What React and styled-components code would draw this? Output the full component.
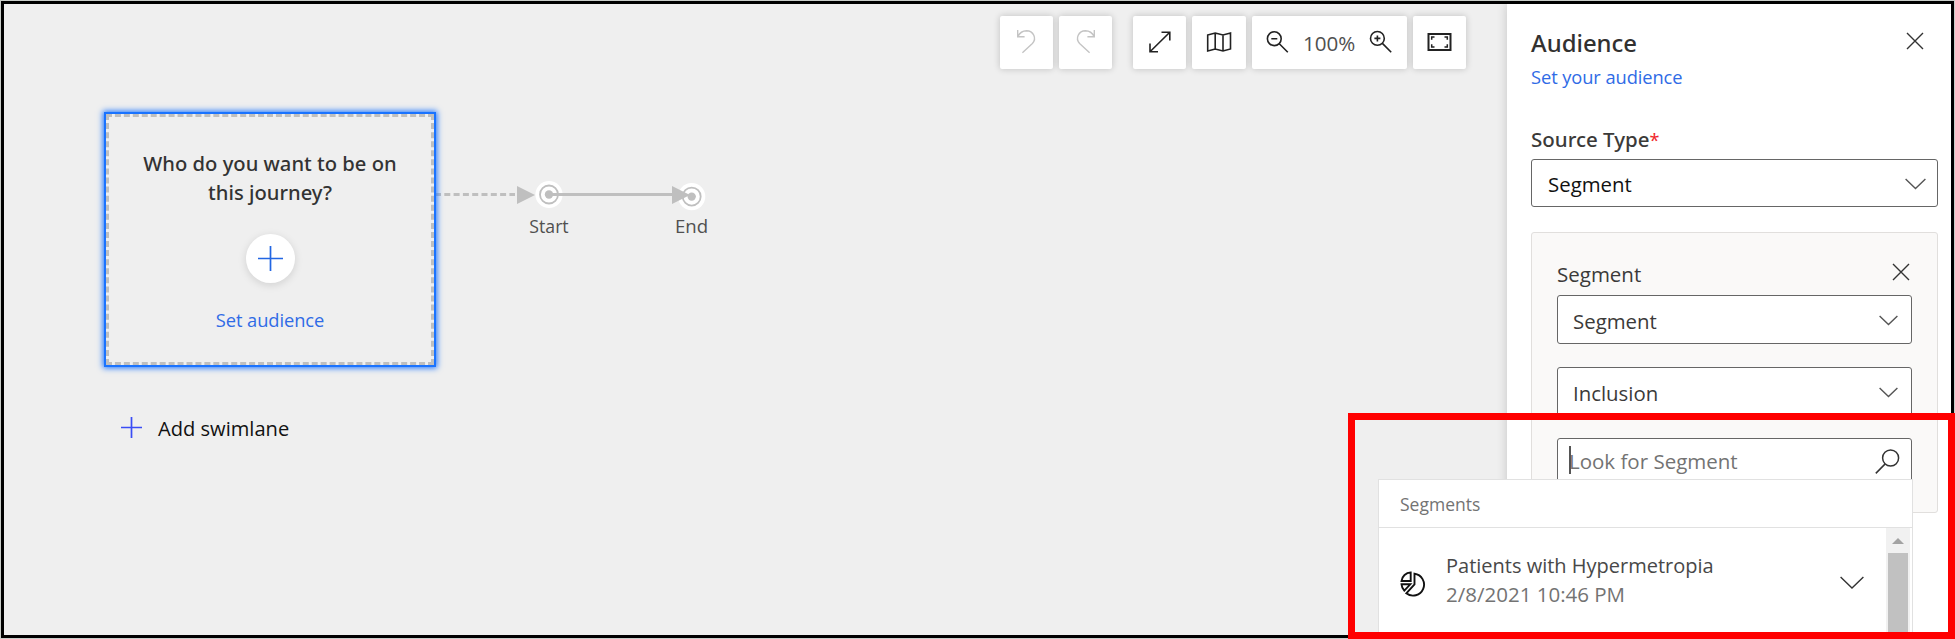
import React from "react";
import styled, { createGlobalStyle } from "styled-components";

const GlobalStyle = createGlobalStyle`
  *, *::before, *::after { box-sizing: border-box; }
  body {
    margin: 0;
    background: #c9cdc9;
    font-family: "Open Sans", "Noto Sans", sans-serif;
    color: #323130;
  }
`;

const Screen = styled.div`
  position: relative;
  width: 1955px;
  height: 639px;
  padding: 1px;
  overflow: hidden;
`;

const Frame = styled.div`
  display: flex;
  width: 1953px;
  height: 637px;
  border: 3px solid #000;
  background: #efefef;
`;

const Canvas = styled.main`
  position: relative;
  flex: 1;
  min-width: 0;
`;

const Toolbar = styled.div`
  display: flex;
  justify-content: flex-end;
  gap: 6px;
  padding: 12px 41px 0 0;
`;

const ToolButton = styled.button`
  display: flex;
  width: ${(p) => p.$width || 53}px;
  height: 53px;
  margin: 0 ${(p) => p.$after || 0}px 0 0;
  padding: 0;
  border: 0;
  border-radius: 2px;
  background: #fff;
  color: ${(p) => (p.$muted ? "#c4c4c4" : "#222")};
  box-shadow: 0 0 7px rgba(0, 0, 0, 0.2);
  font: inherit;
`;

const ZoomValue = styled.span`
  width: 52px;
  margin: 12px 0 0 -2px;
  font-size: 20.6px;
  line-height: 30px;
  color: #505050;
  white-space: nowrap;
`;

const Stroke = styled.svg`
  display: block;
  flex: none;
  fill: none;
  stroke: ${(p) => p.$color || "currentColor"};
  stroke-width: ${(p) => p.$weight || 1.4};
  transform: ${(p) => (p.$flip ? "scaleX(-1)" : "none")};
`;

const Node = styled.div`
  position: absolute;
  left: ${(p) => p.$x}px;
  top: ${(p) => p.$y}px;
`;

const AudienceCard = styled.section`
  display: flex;
  flex-direction: column;
  align-items: center;
  width: 328px;
  height: 251px;
  padding-top: 32px;
  border: 3px dashed #bfbfbf;
  box-shadow: 0 0 0 2px #1a73ff, 0 0 6px 3px #1a73ff;
`;

const CardTitle = styled.h2`
  width: 270px;
  margin: 0;
  font-family: "Noto Sans", sans-serif;
  font-size: 20.2px;
  font-weight: 500;
  line-height: 29px;
  text-align: center;
  color: #333;
`;

const RoundButton = styled.button`
  display: grid;
  place-items: center;
  width: 49px;
  height: 49px;
  margin: 27px 0 25px;
  padding: 0;
  border: 0;
  border-radius: 50%;
  background: #fff;
  box-shadow: 0 2px 8px rgba(0, 0, 0, 0.13);
`;

const Link = styled.a`
  font-size: 18.3px;
  line-height: 24px;
  letter-spacing: -0.08px;
  color: #2f6be6;
`;

const NodeLabel = styled.span`
  display: block;
  width: 60px;
  font-size: ${(p) => p.$size || 18}px;
  line-height: 24px;
  text-align: center;
  color: #505050;
`;

const Swimlane = styled.button`
  display: flex;
  align-items: center;
  gap: 16px;
  padding: 0;
  border: 0;
  background: none;
  font: 20.1px/28px "Open Sans", "Noto Sans", sans-serif;
  color: #111;
  white-space: nowrap;
`;

const Panel = styled.aside`
  position: relative;
  flex: none;
  width: 444px;
  padding: 23px 13px 0 24px;
  background: #fff;
  box-shadow: 0 0 10px rgba(0, 0, 0, 0.18);
  clip-path: inset(0 0 0 -20px);
`;

const Row = styled.div`
  display: flex;
  justify-content: space-between;
  align-items: flex-start;
  padding-right: ${(p) => p.$inset || 0}px;
`;

const PanelTitle = styled.h1`
  margin: 0;
  font-family: "Noto Sans", sans-serif;
  font-size: 23.9px;
  font-weight: 500;
  line-height: 32px;
`;

const PanelLink = styled.a`
  display: block;
  margin-top: 5px;
  font-size: 18.3px;
  line-height: 26px;
  letter-spacing: -0.08px;
  color: #2f6be6;
`;

const Label = styled.label`
  display: block;
  height: 28px;
  margin-top: ${(p) => p.$top || 0}px;
  font-family: ${(p) => (p.$strong ? '"Noto Sans"' : '"Open Sans"')}, sans-serif;
  font-size: 20.5px;
  font-weight: ${(p) => (p.$strong ? 500 : 400)};
  line-height: 28px;
  color: #3b3a39;
`;

const Required = styled.span`
  font-size: 18px;
  font-weight: 400;
  color: #f0262d;
`;

const Field = styled.div`
  display: flex;
  justify-content: space-between;
  align-items: center;
  height: ${(p) => p.$height || 49}px;
  margin-top: ${(p) => p.$top}px;
  padding: 2px ${(p) => p.$right || 13}px 0 ${(p) => p.$left || 15}px;
  border: 1px solid #666;
  border-radius: 3px;
  background: #fff;
  font-size: 20.4px;
  line-height: 30px;
  color: ${(p) => p.$color || "#3b3a39"};
`;

const SegmentCard = styled.section`
  height: 281px;
  margin-top: 25px;
  padding: 27px 25px 0;
  border: 1px solid #e1dfdd;
  border-radius: 3px;
  background: #faf9f8;
`;

const SearchText = styled.span`
  position: relative;
  margin-top: -5px;
  font-size: 20.5px;
`;

const Caret = styled.i`
  position: absolute;
  left: 0;
  top: 0;
  width: 2px;
  height: 28px;
  background: #555;
`;

const Flyout = styled.div`
  position: absolute;
  left: 1378px;
  top: 479px;
  width: 535px;
  height: 160px;
  border: 1px solid #e1e1e1;
  background: #fff;
`;

const FlyoutHeader = styled.div`
  height: 48px;
  padding: 12px 0 0 21px;
  border-bottom: 1px solid #e1e1e1;
  font-size: 17.5px;
  line-height: 24px;
  color: #737373;
`;

const FlyoutBody = styled.div`
  display: flex;
  height: 111px;
  padding-right: 2px;
`;

const Result = styled.div`
  display: flex;
  flex: 1;
  padding: 23px 22px 0 21px;
`;

const ResultText = styled.div`
  flex: 1;
  padding-left: 20px;
  font-size: 20px;
  line-height: 29px;
  color: #484848;
  white-space: nowrap;
`;

const ResultDate = styled.div`
  font-size: 20.5px;
  color: #737373;
`;

const Scrollbar = styled.div`
  width: 24px;
  padding: 10px 2px 0;
  background: #f1f1f1;
`;

const ScrollUp = styled.div`
  width: 0;
  margin: 0 auto 9px;
  border: 6px solid transparent;
  border-top: 0;
  border-bottom-color: #a3a3a3;
`;

const ScrollThumb = styled.div`
  height: 90px;
  background: #c1c1c1;
`;

const Highlight = styled.div`
  position: absolute;
  left: 1348px;
  top: 413px;
  width: 607px;
  height: 226px;
  border: 7px solid #f00;
`;

const IconSlot = styled.span`
  display: block;
  margin-top: ${(p) => p.$top}px;
`;

const Close = () => (
  <Stroke width="18" height="18" $color="#333">
    <path d="M1 1 17 17M17 1 1 17" />
  </Stroke>
);

const Chevron = ({ w = 20, color = "#555" }) => (
  <Stroke width={w} height={w / 2 + 2} $color={color}>
    <path d={`M.6 1 ${w / 2} ${w / 2} ${w - 0.6} 1`} />
  </Stroke>
);

const Plus = ({ size, color }) => (
  <Stroke width={size} height={size} $color={color} $weight={1.7}>
    <path d={`M${size / 2} 0V${size}M0 ${size / 2}H${size}`} />
  </Stroke>
);

const TurnArrow = ({ flip }) => (
  <Stroke width="53" height="53" $flip={flip}>
    <path d="M17.7 14V20.7H24.6M17.7 20.7C19.7 16.7 23 14.7 26.5 14.7C33.5 14.9 37 22.5 32.4 27.4L22.4 36.7" />
  </Stroke>
);

const Target = ({ x, y }) => (
  <g>
    <circle cx={x} cy={y} r="9" fill="none" stroke="#bfbfbf" strokeWidth="1.8" />
    <circle cx={x} cy={y} r="4.2" fill="#bfbfbf" />
  </g>
);

export default function App() {
  return (
    <>
      <GlobalStyle />
      <Screen>
        <Frame>
          <Canvas>
            <Toolbar>
              <ToolButton $muted aria-label="Undo"><TurnArrow /></ToolButton>
              <ToolButton $muted $after={15} aria-label="Redo"><TurnArrow flip /></ToolButton>
              <ToolButton aria-label="Expand">
                <Stroke width="53" height="53" $weight={1.6}>
                  <path d="M17 35.7 36.8 16.3M28.5 16.3H36.8V24.6M17 27.5V35.7H25" />
                </Stroke>
              </ToolButton>
              <ToolButton $width={54} aria-label="Map">
                <Stroke width="54" height="53" $weight={1.6}>
                  <path d="M15.7 19 23.2 17 31 19 38.5 17V33L31 35 23.2 33 15.7 35ZM23.2 17V33M31 19V35" />
                </Stroke>
              </ToolButton>
              <ToolButton as="div" $width={155}>
                <Stroke width="53" height="53" $weight={1.6}>
                  <circle cx="22.3" cy="22.7" r="6.9" />
                  <path d="M27.3 27.7 35.8 36.2M19.3 22.7H25.3" />
                </Stroke>
                <ZoomValue>100%</ZoomValue>
                <Stroke width="52" height="53" $weight={1.6}>
                  <circle cx="22.4" cy="22.4" r="6.9" />
                  <path d="M27.4 27.4 36.2 36.2M19.4 22.4H25.4M22.4 19.4V25.4" />
                </Stroke>
              </ToolButton>
              <ToolButton aria-label="Fit to screen">
                <Stroke width="53" height="53" $weight={2}>
                  <rect x="15.5" y="18" width="22" height="16" />
                  <path
                    strokeWidth="1.5"
                    d="M18.7 23.7V20.9H21.5M31.5 20.9H34.3V23.7M34.3 28.3V31.1H31.5M21.5 31.1H18.7V28.3"
                  />
                </Stroke>
              </ToolButton>
            </Toolbar>

            <Node $x={430} $y={170}>
              <svg width="290" height="50" viewBox="434 174 290 50" style={{ display: "block" }}>
                <circle cx="549" cy="194.5" r="13.6" fill="#fff" />
                <circle cx="691.7" cy="196.6" r="13.6" fill="#fff" />
                <Target x={549} y={194.5} />
                <Target x={691.7} y={196.6} />
                <path d="M435 194.5H515" stroke="#bfbfbf" strokeWidth="2.8" strokeDasharray="6 3.3" />
                <path d="M517 186 535 195 517 204ZM672 186 690 195 672 204Z" fill="#bfbfbf" />
                <path d="M549 194.5H674" stroke="#bfbfbf" strokeWidth="3" />
              </svg>
            </Node>
            <Node $x={102} $y={110}>
              <AudienceCard>
                <CardTitle>Who do you want to be on this journey?</CardTitle>
                <RoundButton aria-label="Add audience"><Plus size={25} color="#2266e3" /></RoundButton>
                <Link>Set audience</Link>
              </AudienceCard>
            </Node>
            <Node $x={515} $y={210}><NodeLabel $size={17.7}>Start</NodeLabel></Node>
            <Node $x={657.5} $y={210}><NodeLabel $size={18.6}>End</NodeLabel></Node>
            <Node $x={117} $y={411}>
              <Swimlane>
                <IconSlot $top={-4}><Plus size={21} color="#3a4df5" /></IconSlot>
                Add swimlane
              </Swimlane>
            </Node>
          </Canvas>

          <Panel>
            <Row $inset={14}>
              <PanelTitle>Audience</PanelTitle>
              <IconSlot $top={5}><Close /></IconSlot>
            </Row>
            <PanelLink>Set your audience</PanelLink>
            <Label $strong $top={35}>Source Type<Required>*</Required></Label>
            <Field $top={6} $height={48} $left={16} $right={11} $color="#111">
              Segment
              <Chevron w={21} />
            </Field>
            <SegmentCard>
              <Row $inset={2}>
                <Label>Segment</Label>
                <IconSlot $top={3}><Close /></IconSlot>
              </Row>
              <Field $top={7}>Segment<Chevron w={19} /></Field>
              <Field $top={23}>Inclusion<Chevron w={19} /></Field>
              <Field $top={22} $left={11} $right={11} $color="#737373">
                <SearchText><Caret />Look for Segment</SearchText>
                <IconSlot $top={-5}>
                  <Stroke width="25" height="25" $color="#333" $weight={1.5}>
                    <circle cx="15.6" cy="9" r="8" />
                    <path d="M10.2 14.9.8 24.4" />
                  </Stroke>
                </IconSlot>
              </Field>
            </SegmentCard>
          </Panel>
        </Frame>

        <Flyout>
          <FlyoutHeader>Segments</FlyoutHeader>
          <FlyoutBody>
            <Result>
              <IconSlot $top={20}>
                <Stroke width="26" height="26" $color="#111" $weight={1.9}>
                  <path d="M14.5 2.7V13.3L6.3 22.3A11 11 0 1 0 14.5 2.7ZM10.7 1.4V10H1.5A9.8 9.8 0 0 1 10.7 1.4ZM1.5 13.3H10.3L4.3 19.6A10 10 0 0 1 1.5 13.3Z" />
                </Stroke>
              </IconSlot>
              <ResultText>
                Patients with Hypermetropia
                <ResultDate>2/8/2021 10:46 PM</ResultDate>
              </ResultText>
              <IconSlot $top={25}><Chevron w={24} color="#333" /></IconSlot>
            </Result>
            <Scrollbar>
              <ScrollUp />
              <ScrollThumb />
            </Scrollbar>
          </FlyoutBody>
        </Flyout>
        <Highlight />
      </Screen>
    </>
  );
}
